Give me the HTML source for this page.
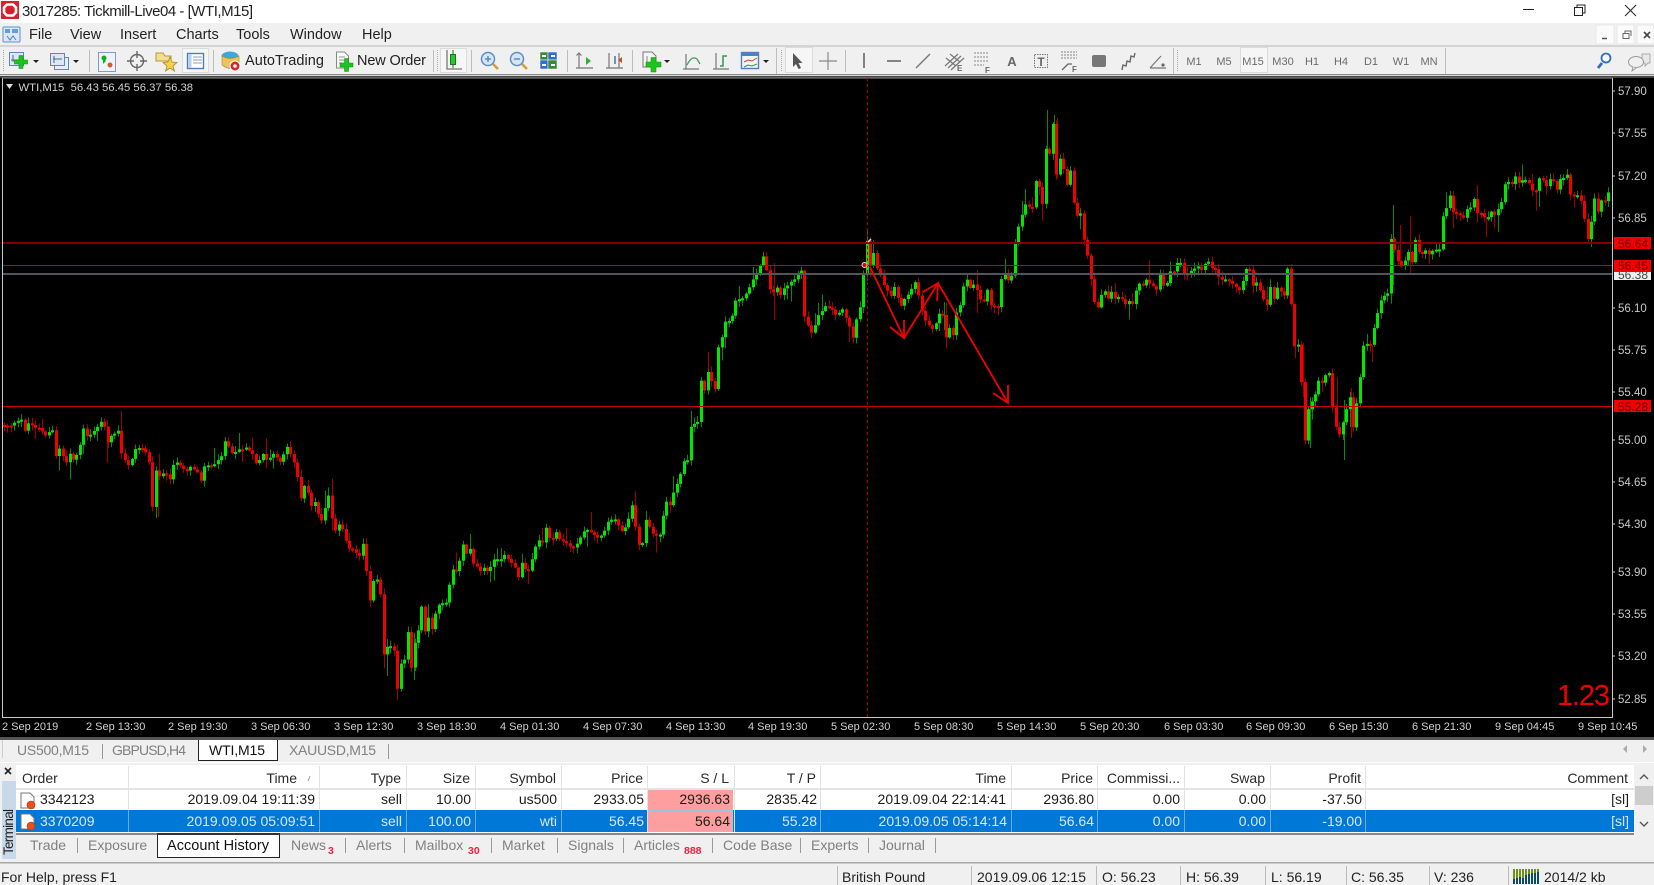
<!DOCTYPE html>
<html><head><meta charset="utf-8"><title>3017285: Tickmill-Live04 - [WTI,M15]</title>
<style>
html,body{margin:0;padding:0;background:#f0f0f0;overflow:hidden}
svg{display:block;font-family:"Liberation Sans",Arial,sans-serif}
.h text{font-size:14px;fill:#2a2a2a;text-anchor:end}
.w text{font-size:14px;fill:#1c1c1c;text-anchor:end}
.b text{font-size:14px;fill:#d8e8f8;text-anchor:end}
.t text{font-size:14px;fill:#808080}
.r{font-size:10.5px!important;font-weight:bold;fill:#f0203c!important}
.m text{font-size:14.5px;fill:#222}
.p text{font-size:11.5px;fill:#c8c8c8}
.x text{font-size:11px;fill:#d0d0d0}
.f text{font-size:11px;fill:#6a6a6a;text-anchor:middle}
.s text{font-size:14px;fill:#222}
.g{fill:none;stroke:#666;stroke-width:1.4}
</style></head>
<body>
<svg xmlns="http://www.w3.org/2000/svg" width="1654" height="885" viewBox="0 0 1654 885">
<rect width="1654" height="885" fill="#f0f0f0"/>
<!-- title bar -->
<rect width="1654" height="23" fill="#fff"/>
<rect x="1" y="1" width="18" height="18" fill="#d8202c"/>
<path d="M7 4.500h6l3 3v5l-3 3H7l-3-3v-5z" fill="none" stroke="#fff" stroke-width="2.600"/>
<text x="22" y="16" font-size="15" fill="#222" textLength="231">3017285: Tickmill-Live04 - [WTI,M15]</text>
<path d="M1523 9.500h11" stroke="#222" stroke-width="1"/>
<path d="M1574.500 7.500h8v8h-8zM1577 7.500v-2.500h8v8h-2.500" fill="none" stroke="#222"/>
<path d="M1625 5l11 11M1636 5l-11 11" stroke="#222" stroke-width="1"/>
<!-- menu -->
<g fill="#6a9bd8"><rect x="3" y="27" width="17" height="15" rx="1" fill="#dce8f8" stroke="#5d8fd0"/><rect x="5" y="29" width="5" height="4"/><rect x="12" y="29" width="6" height="4"/><path d="M7 36l3 4 3-4 3 4" fill="none" stroke="#4b7fc4"/></g>
<g class="m">
<text x="29" y="39">File</text><text x="70" y="39">View</text><text x="120" y="39">Insert</text><text x="176" y="39">Charts</text><text x="236" y="39">Tools</text><text x="290" y="39">Window</text><text x="362" y="39">Help</text>
</g>
<g fill="#fbfbfb" stroke="#e8e8e8"><rect x="1596" y="25" width="18" height="19"/><rect x="1617" y="25" width="17" height="19"/><rect x="1637" y="25" width="17" height="19"/></g>
<path d="M1602 38.500h5" stroke="#555" stroke-width="1.500"/>
<path d="M1623 33.500h6v5h-6zM1625 33v-2h6v5" fill="none" stroke="#666"/>
<path d="M1644 32l6 6M1650 32l-6 6" stroke="#444" stroke-width="1.600"/>
<rect y="45" width="1654" height="2" fill="#d4d4d4"/>
<!-- toolbar -->
<rect y="74" width="1654" height="1" fill="#8a8a8a"/><rect y="75" width="1654" height="1" fill="#d8d8d8"/><rect y="76" width="1654" height="2" fill="#444"/>
<g stroke="#bdbdbd"><path d="M89.500 50v22M213.500 50v22M433.500 50v22M471.500 50v22M567.500 50v22M632.500 50v22M776.500 48v26M845.500 50v22M1173.500 48v26M1445.500 48v26"/></g>
<g stroke="#aaa" stroke-dasharray="1 1"><path d="M3.500 50v22M437.500 50v22M781.500 50v22M1177.500 50v22"/></g>
<!-- active boxes -->
<g fill="#f6f6f6" stroke="#dcdcdc"><rect x="182.500" y="48.500" width="26" height="24"/><rect x="440.500" y="48.500" width="26" height="24"/><rect x="785.500" y="47.500" width="27" height="25"/><rect x="1240.500" y="47.500" width="27" height="25"/></g>
<!-- new chart -->
<rect x="9.500" y="52.500" width="14" height="13" fill="#dde8f6" stroke="#5d86bd"/>
<path d="M13 55v7M11 60h8" stroke="#567" fill="none"/>
<path d="M19 55.500h4v4.500h4.500v4h-4.500v4.500h-4v-4.500h-4.500v-4h4.500z" fill="#1cc41c" stroke="#0c900c" stroke-width=".6"/>
<path d="M33 60h6l-3 3z" fill="#222"/>
<rect x="54.500" y="57.500" width="14" height="12" fill="#e8eef8" stroke="#5d86bd"/><rect x="50.500" y="53.500" width="14" height="12" fill="#dde8f6" stroke="#5d86bd"/>
<path d="M53 59h9M54 56v7" stroke="#567"/>
<path d="M73 60h6l-3 3z" fill="#222"/>
<!-- market watch -->
<rect x="98.500" y="52.500" width="17" height="19" fill="#eef3fa" stroke="#7c9cc6"/><path d="M103 58l3 3-3 3z" fill="#18b018"/><circle cx="104" cy="58" r="2.500" fill="#1aa91a"/><circle cx="110" cy="65" r="2.500" fill="#d85a2a"/>
<!-- data window -->
<circle cx="137" cy="61" r="6.500" class="g"/><path d="M137 51v7M137 64v7M127 61h7M140 61h7" class="g"/>
<!-- navigator star -->
<path d="M156 53h7l2 3h6v5h-15z" fill="#f4dc90" stroke="#b39a48"/><path d="M170 57l2 5 5 .5-4 3.500 1.500 5-4.500-3-4.500 3 1.500-5-4-3.500 5-.5z" fill="#f6d24a" stroke="#a8891e" stroke-width=".8"/>
<!-- terminal -->
<rect x="187.500" y="53.500" width="16" height="15" fill="#fff" stroke="#4d7fc0" stroke-width="1.400"/><rect x="188" y="54" width="3.500" height="14" fill="#b8cfee"/><path d="M193 57h9M193 60h9M193 63h9" stroke="#99b"/>
<!-- autotrading -->
<ellipse cx="230" cy="56" rx="8.500" ry="4.500" fill="#45a4d8"/><path d="M222 56q8 5 17 0v9q-8 7-17 0z" fill="#eec35a" stroke="#a88a30" stroke-width=".6"/><circle cx="235" cy="66" r="5" fill="#d8262c" stroke="#fff"/><circle cx="235" cy="66" r="1.800" fill="#fff"/>
<text x="245" y="65" font-size="14.500" fill="#222" textLength="79">AutoTrading</text>
<!-- new order -->
<path d="M336.500 52h8l4 4v12h-12z" fill="#f8f8f8" stroke="#888"/><path d="M339 57h6M339 60h7M339 63h3" stroke="#999"/>
<path d="M344.500 58.500h4v4.500h4.500v4h-4.500v4.500h-4v-4.500h-4.500v-4h4.500z" fill="#1cc41c" stroke="#0c900c" stroke-width=".5"/>
<text x="357" y="65" font-size="14.500" fill="#222" textLength="69">New Order</text>
<!-- candle chart -->
<path d="M447 50v19h15" fill="none" stroke="#777" stroke-width="1.300"/><rect x="450.500" y="54.500" width="5" height="10" fill="#28c828" stroke="#167816"/><path d="M453 50v4M453 65v3" stroke="#167816"/>
<!-- zoom -->
<circle cx="488" cy="59" r="6.500" fill="#d4e6f6" stroke="#5c8fc4" stroke-width="1.500"/><path d="M485 59h6M488 56v6" stroke="#4a7db0" stroke-width="1.300"/><path d="M493 64l5 5" stroke="#d69b3a" stroke-width="2.600"/>
<circle cx="517" cy="59" r="6.500" fill="#d4e6f6" stroke="#5c8fc4" stroke-width="1.500"/><path d="M514 59h6" stroke="#4a7db0" stroke-width="1.300"/><path d="M522 64l5 5" stroke="#d69b3a" stroke-width="2.600"/>
<!-- tile -->
<g stroke="#fff" stroke-width=".5"><rect x="540" y="52" width="8" height="8" fill="#3a8a3a"/><rect x="548" y="52" width="9" height="8" fill="#2f6fd0"/><rect x="540" y="60" width="8" height="9" fill="#2f6fd0"/><rect x="548" y="60" width="9" height="9" fill="#3a8a3a"/></g>
<path d="M542 56h4M551 56h4M542 65h4M551 65h4" stroke="#fff" stroke-width="2"/>
<!-- shift -->
<path d="M579 53v15M576 68h17M576.500 55.500l2.500-2.500 2.500 2.500" fill="none" stroke="#777" stroke-width="1.200"/><path d="M586 57l5 4-5 4z" fill="#32b032"/>
<path d="M609 53v15M606 68h17M619 53v15" fill="none" stroke="#777" stroke-width="1.200"/><path d="M615 56v8" stroke="#3b78b4" stroke-width="1.500"/><path d="M618 60l4-3v6z" fill="#c85020"/>
<!-- indicators -->
<path d="M643 52h9l4 4v11h-13z" fill="#f4f4f4" stroke="#777"/><path d="M647 56v6" stroke="#888"/>
<path d="M651 57.500h5v4.500h5v5h-5v5h-5v-5h-5v-5h5z" fill="#1cc41c" stroke="#0c900c" stroke-width=".5"/>
<path d="M664 60h6l-3 3z" fill="#222"/>
<path d="M686 54v15M683 69h16" fill="none" stroke="#777" stroke-width="1.200"/><path d="M687 65q5-10 10-6l3 5" fill="none" stroke="#3a9a60" stroke-width="1.300"/>
<path d="M716 53v16M713 69h16" fill="none" stroke="#777" stroke-width="1.200"/><path d="M720 66h3v-10h4" fill="none" stroke="#2e9a50" stroke-width="1.500"/>
<rect x="741.500" y="52.500" width="17" height="16" fill="#f4f4f4" stroke="#4c80c0" stroke-width="1.400"/><rect x="741" y="52" width="18" height="4" fill="#4c80c0"/><path d="M744 62l4-2 4 1 5-3" stroke="#c84b28" fill="none"/><path d="M744 67l4-2 4 1 5-2" stroke="#2e9a50" fill="none"/>
<path d="M763 60h6l-3 3z" fill="#222"/>
<!-- cursor etc -->
<path d="M793 53v14l3-3 2.500 5 2.500-1-2.500-5h4z" fill="#555"/>
<path d="M828 52v18M819 61h18" stroke="#888" stroke-width="1.200"/>
<path d="M864 53v15" stroke="#777" stroke-width="1.800"/>
<path d="M887 61h14" stroke="#777" stroke-width="1.800"/>
<path d="M916 68l14-14" stroke="#777" stroke-width="1.400"/>
<path d="M945 66l13-12M948 68l13-12M951 70l13-12M946 58l10 8M950 54l10 8" stroke="#777" fill="none" stroke-width="1.200"/><text x="957" y="71" font-size="8" font-weight="bold" fill="#666">E</text>
<path d="M974 53h15M974 57h15M974 61h15M974 65h10" stroke="#888" stroke-dasharray="2 1"/><text x="985" y="73" font-size="8" font-weight="bold" fill="#666">F</text>
<text x="1012" y="66" font-size="13" font-weight="bold" fill="#666" text-anchor="middle">A</text>
<rect x="1034.500" y="54.500" width="13" height="13" fill="none" stroke="#777" stroke-dasharray="1.500 1"/><text x="1041" y="66" font-size="12" font-weight="bold" fill="#666" text-anchor="middle">T</text>
<path d="M1061 52h16M1061 55h16M1061 58h16" stroke="#888" stroke-dasharray="2 1"/><path d="M1062 70l6-6h4" fill="none" stroke="#666" stroke-width="1.300"/><text x="1072" y="72" font-size="8" font-weight="bold" fill="#666">F</text>
<rect x="1092" y="55" width="14" height="12" rx="2" fill="#777"/>
<path d="M1122 70l1-5 3 1 1-5 3 1 1-6 3 1 1-4" fill="none" stroke="#666" stroke-width="1.400"/>
<path d="M1150 68h16M1150 68l11-12" fill="none" stroke="#777" stroke-width="1.200"/><circle cx="1163" cy="65" r="1.600" fill="#666"/>
<g class="f"><text x="1194" y="65">M1</text><text x="1224" y="65">M5</text><text x="1253" y="65">M15</text><text x="1283" y="65">M30</text><text x="1312" y="65">H1</text><text x="1341" y="65">H4</text><text x="1371" y="65">D1</text><text x="1401" y="65">W1</text><text x="1429" y="65">MN</text></g>
<circle cx="1606" cy="58" r="4.500" fill="#fff" stroke="#2e6fc0" stroke-width="1.800"/><path d="M1602 63l-4 5" stroke="#2e6fc0" stroke-width="2.800"/>
<path d="M1642 54h8v9h-2l-3 3v-3h-3z" fill="#e8e8e8" stroke="#aaa"/><ellipse cx="1636" cy="62" rx="7.500" ry="5.500" fill="#f0f0f0" stroke="#999"/><path d="M1633 67l-1 4 4-3" fill="#f0f0f0" stroke="#999"/>
<!-- chart -->
<rect y="78" width="1654" height="660" fill="#000"/>
<g id="c"></g>
<path d="M2.500 78v640M2.500 717.500H1612.500M1612.500 78v640" fill="none" stroke="#c8c8c8"/>
<path d="M2.500 78H1612.500" fill="none" stroke="#8c8c8c"/>
<rect x="3" y="242" width="1609" height="2" fill="#800000"/>
<rect x="3" y="265" width="1609" height="1" fill="#c80000"/>
<rect x="3" y="273" width="1609" height="2" fill="#50555c"/>
<rect x="3" y="406" width="1609" height="1" fill="#c80000"/>
<path d="M867.500 78V717" stroke="#b00000" stroke-dasharray="3 3"/>
<g fill="none" stroke="#f00000" stroke-width="1.800"><path d="M870 267L904 338M890 327L904 338L904 320"/><path d="M904 338L938 283M923 292L938 283L937 301"/><path d="M938 283L1008 403M993 393L1008 403L1008 385"/></g>
<circle cx="864.500" cy="265" r="2.500" fill="#d00" stroke="#ddd" stroke-width="1"/><path d="M868 242l3-3" stroke="#ddd" stroke-width="1.500"/>
<path d="M6 84h7l-3.500 5z" fill="#ddd"/>
<g class="x"><text x="18.500" y="91" xml:space="preserve" style="font-size:11.300px">WTI,M15  56.43 56.45 56.37 56.38</text></g>
<text x="1557" y="705" font-size="29" fill="#f00000" textLength="53">1.23</text>
<g stroke="#c8c8c8"><path d="M1612 91h3M1612 133h3M1612 176h3M1612 218h3M1612 308h3M1612 350h3M1612 392h3M1612 440h3M1612 482h3M1612 524h3M1612 572h3M1612 614h3M1612 656h3M1612 699h3"/></g>
<g class="p">
<text x="1618" y="95">57.90</text><text x="1618" y="137">57.55</text><text x="1618" y="180">57.20</text><text x="1618" y="222">56.85</text><text x="1618" y="312">56.10</text><text x="1618" y="354">55.75</text><text x="1618" y="396">55.40</text><text x="1618" y="444">55.00</text><text x="1618" y="486">54.65</text><text x="1618" y="528">54.30</text><text x="1618" y="576">53.90</text><text x="1618" y="618">53.55</text><text x="1618" y="660">53.20</text><text x="1618" y="703">52.85</text>
</g>
<rect x="1614" y="237" width="37" height="12" fill="#f40000"/><text x="1618" y="248" font-size="12" fill="#600">56.64</text>
<rect x="1614" y="272" width="37" height="8" fill="#eee"/><text x="1618" y="279" font-size="12" fill="#444">56.38</text>
<rect x="1614" y="260" width="37" height="12" fill="#f40000"/><text x="1618" y="270" font-size="12" fill="#600">56.45</text>
<rect x="1614" y="400" width="37" height="12" fill="#f40000"/><text x="1618" y="411" font-size="12" fill="#600">55.28</text>
<g class="x">
<text x="2" y="730">2 Sep 2019</text><text x="86" y="730">2 Sep 13:30</text><text x="168" y="730">2 Sep 19:30</text><text x="251" y="730">3 Sep 06:30</text><text x="334" y="730">3 Sep 12:30</text><text x="417" y="730">3 Sep 18:30</text><text x="500" y="730">4 Sep 01:30</text><text x="583" y="730">4 Sep 07:30</text><text x="666" y="730">4 Sep 13:30</text><text x="748" y="730">4 Sep 19:30</text><text x="831" y="730">5 Sep 02:30</text><text x="914" y="730">5 Sep 08:30</text><text x="997" y="730">5 Sep 14:30</text><text x="1080" y="730">5 Sep 20:30</text><text x="1164" y="730">6 Sep 03:30</text><text x="1246" y="730">6 Sep 09:30</text><text x="1329" y="730">6 Sep 15:30</text><text x="1412" y="730">6 Sep 21:30</text><text x="1495" y="730">9 Sep 04:45</text><text x="1578" y="730">9 Sep 10:45</text>
</g>
<rect y="737" width="1654" height="3" fill="#555"/>
<!-- chart tabs -->
<path d="M198.500 740v20.500h79V740" fill="#fff" stroke="#222"/>
<rect x="2" y="740" width="1" height="18" fill="#ccc"/>
<path d="M102.500 744v15M388.500 744v15" stroke="#999"/>
<g class="t"><text x="17" y="755" textLength="72">US500,M15</text><text x="112" y="755" textLength="74">GBPUSD,H4</text><text x="289" y="755" textLength="87">XAUUSD,M15</text></g>
<text x="209" y="755" font-size="14" fill="#111" textLength="56">WTI,M15</text>
<path d="M1627 745v8l-4-4z" fill="#aaa"/><path d="M1643 745v8l4-4z" fill="#aaa"/>
<!-- terminal -->
<rect y="762" width="1654" height="1" fill="#fff"/>
<rect x="16" y="765" width="1618" height="70" fill="#fff"/>
<rect x="16" y="788" width="1618" height="2" fill="#e4e4e4"/>
<rect x="16" y="810" width="1618" height="22" fill="#0078d7"/>
<rect x="647" y="790" width="86" height="20" fill="#ff9e9e"/>
<rect x="647.500" y="810.500" width="85" height="21" fill="#ff9e9e" stroke="#a0c4e8"/>
<rect x="16" y="833" width="1618" height="2" fill="#888"/>
<g stroke="#e2e2e2"><path d="M128.500 766v66M319.500 766v66M406.500 766v66M475.500 766v66M561.500 766v66M647.500 766v66M734.500 766v66M820.500 766v66M1011.500 766v66M1097.500 766v66M1184.500 766v66M1270.500 766v66M1365.500 766v66"/></g>
<g stroke="#6fa8dc"><path d="M128.500 810v22M319.500 810v22M406.500 810v22M475.500 810v22M561.500 810v22M820.500 810v22M1011.500 810v22M1097.500 810v22M1184.500 810v22M1270.500 810v22M1365.500 810v22"/></g>
<text x="22" y="783" font-size="14" fill="#2a2a2a">Order</text>
<g class="h">
<text x="297" y="783">Time</text><text x="401" y="783">Type</text><text x="470" y="783">Size</text><text x="556" y="783">Symbol</text><text x="643" y="783">Price</text><text x="729" y="783">S / L</text><text x="816" y="783">T / P</text><text x="1006" y="783">Time</text><text x="1093" y="783">Price</text><text x="1180" y="783">Commissi...</text><text x="1265" y="783">Swap</text><text x="1361" y="783">Profit</text><text x="1628" y="783">Comment</text>
</g>
<path d="M308 781l2-5" stroke="#999"/>
<path d="M21 793h9l4 4v11H21z" fill="#fff" stroke="#777"/><circle cx="31" cy="805" r="4" fill="#e8501c" stroke="#a83010" stroke-width=".6"/>
<path d="M21 814h9l4 4v11H21z" fill="#fff" stroke="#777"/><circle cx="31" cy="826" r="4" fill="#e8501c" stroke="#a83010" stroke-width=".6"/>
<text x="40" y="804" font-size="14" fill="#1c1c1c">3342123</text>
<text x="40" y="826" font-size="14" fill="#d8e8f8">3370209</text>
<g class="w">
<text x="315" y="804">2019.09.04 19:11:39</text><text x="402" y="804">sell</text><text x="471" y="804">10.00</text><text x="557" y="804">us500</text><text x="644" y="804">2933.05</text><text x="730" y="804">2936.63</text><text x="817" y="804">2835.42</text><text x="1006" y="804">2019.09.04 22:14:41</text><text x="1094" y="804">2936.80</text><text x="1180" y="804">0.00</text><text x="1266" y="804">0.00</text><text x="1362" y="804">-37.50</text><text x="1629" y="804">[sl]</text>
</g>
<g class="b">
<text x="315" y="826">2019.09.05 05:09:51</text><text x="402" y="826">sell</text><text x="471" y="826">100.00</text><text x="557" y="826">wti</text><text x="644" y="826">56.45</text><text x="817" y="826">55.28</text><text x="1007" y="826">2019.09.05 05:14:14</text><text x="1094" y="826">56.64</text><text x="1180" y="826">0.00</text><text x="1266" y="826">0.00</text><text x="1362" y="826">-19.00</text><text x="1629" y="826">[sl]</text>
</g>
<text x="730" y="826" font-size="14" fill="#1c1c1c" text-anchor="end">56.64</text>
<!-- scrollbar -->
<rect x="1635" y="765" width="19" height="70" fill="#f0f0f0"/><rect x="1635" y="786" width="18" height="19" fill="#cdcdcd"/>
<path d="M1640 779l4-4 4 4M1640 822l4 4 4-4" fill="none" stroke="#555" stroke-width="1.400"/>
<!-- left strip -->
<path d="M5 768l6 6M11 768l-6 6" stroke="#222" stroke-width="1.600"/>
<rect x="2" y="781" width="14" height="78" fill="#c9d9e9"/>
<text transform="translate(13,855) rotate(-90)" font-size="13.500" fill="#222" textLength="46">Terminal</text>
<!-- terminal tabs -->
<path d="M157.500 835v22.500h122V835" fill="#fff" stroke="#222"/><rect x="157" y="833" width="123" height="2" fill="#333"/><rect x="158" y="835" width="121" height="22" fill="#fff"/>
<g stroke="#999"><path d="M77.500 838v15M345.500 838v15M404.500 838v15M491.500 838v15M557.500 838v15M623.500 838v15M712.500 838v15M800.500 838v15M868.500 838v15M935.500 838v15"/></g>
<g class="t">
<text x="30" y="850">Trade</text><text x="88" y="850">Exposure</text><text x="291" y="850">News</text><text x="328" y="854" class="r">3</text><text x="356" y="850">Alerts</text><text x="415" y="850">Mailbox</text><text x="468" y="854" class="r">30</text><text x="502" y="850">Market</text><text x="568" y="850">Signals</text><text x="634" y="850">Articles</text><text x="684" y="854" class="r">888</text><text x="723" y="850">Code Base</text><text x="811" y="850">Experts</text><text x="879" y="850">Journal</text>
</g>
<text x="167" y="850" font-size="14.500" fill="#111" textLength="102">Account History</text>
<!-- status -->
<rect y="862" width="1654" height="1.500" fill="#a8a8a8"/>
<g stroke="#bbb"><path d="M837.500 866v19M971.500 866v19M1096.500 866v19M1180.500 866v19M1265.500 866v19M1346.500 866v19M1429.500 866v19M1508.500 866v19"/></g>
<g class="s">
<text x="1" y="882">For Help, press F1</text><text x="842" y="882">British Pound</text><text x="977" y="882">2019.09.06 12:15</text><text x="1102" y="882">O: 56.23</text><text x="1186" y="882">H: 56.39</text><text x="1271" y="882">L: 56.19</text><text x="1351" y="882">C: 56.35</text><text x="1434" y="882">V: 236</text><text x="1544" y="882">2014/2 kb</text>
</g>
<g fill="#6f8f10"><rect x="1513" y="869" width="2" height="14"/><rect x="1516" y="869" width="2" height="14"/><rect x="1519" y="869" width="2" height="14"/><rect x="1522" y="869" width="2" height="14"/><rect x="1525" y="869" width="2" height="14"/><rect x="1528" y="869" width="2" height="14"/><rect x="1531" y="869" width="2" height="14"/><rect x="1534" y="869" width="2" height="14"/><rect x="1537" y="869" width="2" height="14"/></g>
<g fill="#0d4a66"><rect x="1513" y="879" width="2" height="5"/><rect x="1516" y="878" width="2" height="6"/><rect x="1519" y="877" width="2" height="7"/><rect x="1522" y="878" width="2" height="6"/><rect x="1525" y="875" width="2" height="9"/><rect x="1528" y="874" width="2" height="10"/><rect x="1531" y="873" width="2" height="11"/><rect x="1534" y="873" width="2" height="11"/><rect x="1537" y="872" width="2" height="12"/></g>
</svg>
<script>
(function(){
var a=[10,75,30,75,60,60,70,90,80,70,105,85,130,105,145,90,155,168,165,148,185,185,195,160,205,182,225,138,235,82,245,108,265,95,282,62,290,82,300,128,310,110,330,95,340,162,348,182,360,195,380,148,395,142,410,160,418,190,428,322,436,212,446,228,465,220,475,240,485,192,495,185,510,210,520,215,535,200,550,215,562,240,572,200,580,195,595,200,610,180,620,165,630,125,648,160,668,150,688,142,705,165,720,190,735,160,745,180,765,160,785,185,800,142,815,160,825,185,842,298,852,260,862,280,870,320,882,305,892,340,900,365,910,325,920,290,928,355,940,395,948,370,958,390,968,420,978,445,990,445,1005,470,1015,432,1026,515,1035,605,1045,545,1055,540,1065,582,1075,765,1085,738,1095,735,1103,752,1113,870,1122,788,1132,778,1142,695,1152,800,1160,725,1170,690,1180,618,1190,695,1200,655,1210,690,1220,642,1228,612,1240,608,1250,605,1258,552,1268,510,1278,512,1288,480,1298,432,1305,458,1315,450,1328,488,1335,500,1345,515,1355,505,1365,515,1375,500,1385,482,1403,480,1413,468,1425,480,1440,500,1452,535,1462,492,1475,515,1490,475,1500,440,1510,422,1520,430,1530,385,1540,412,1550,418,1558,400];
var b=[50,955,65,960,75,970,90,985,105,970,122,935,133,932,150,945,165,950,180,935,190,905,210,895,225,930,240,925,258,858,275,975,285,968,298,900,315,940,335,945,345,888,355,845,365,855,375,815,385,795,393,762,403,722,412,720,423,618,435,612,445,605,452,485,462,510,472,458,480,480,492,505,500,380,510,350,520,305,530,305,540,288,550,240,560,240,570,232,578,222,598,178,607,160,617,140,627,112,645,205,655,220,665,205,675,228,685,208,695,200,705,182,715,180,725,165,735,150,742,290,752,318,762,335,772,318,782,285,792,275,802,262,815,272,830,285,848,268,878,350,888,300,895,265,907,162,917,63,925,135,935,100,945,145,955,165,965,195,975,215,985,225,995,200,1005,230,1015,258,1025,235,1040,205,1050,190,1060,225,1075,300,1082,295,1090,318,1102,325,1115,282,1130,288,1140,350,1148,325,1158,345,1168,275,1178,255,1188,198,1198,180,1208,205,1218,195,1235,240,1245,245,1255,208,1265,258,1275,255,1285,260,1293,180,1303,160,1313,178,1323,165,1332,70,1342,18];
var c=[8,310,18,143,28,160,37,72,46,225,56,175,65,205,74,255,84,215,93,305,103,350,112,338,122,420,130,465,140,540,150,605,158,620,168,588,178,575,187,595,196,575,205,592,215,592,225,600,233,615,243,603,252,610,262,575,270,550,280,555,290,540,298,550,308,562,318,568,327,525,337,555,346,550,356,515,366,515,372,490,382,490,392,520,402,525,410,510,420,505,430,498,440,510,448,495,458,485,466,505,476,505,486,530,494,540,504,535,514,540,522,548,532,565,542,570,550,545,560,510,568,510,578,560,588,550,598,572,607,595,617,615,625,560,635,595,645,565,655,590,665,530,672,505,683,695,692,735,700,733,710,845,718,1020,728,925,738,905,748,860,757,845,765,850,775,825,785,822,793,925,803,980,812,1000,822,970,832,895,842,980,850,905,858,908,868,830,878,740,888,730,896,735,906,685,915,640,925,600,935,580,945,540,953,415,963,480,972,500,982,478,992,458,1000,490,1010,420,1018,455,1028,458,1037,458,1048,445,1055,460,1065,450,1075,445,1084,445,1093,350,1103,290,1112,340,1122,338,1130,338,1140,355,1150,328,1158,345,1168,298,1178,340,1186,325,1196,350,1205,355,1215,360,1223,338,1233,358,1242,330,1252,275,1260,255,1270,245,1278,255,1288,228,1298,245,1308,240,1317,248,1327,272,1337,270,1345,238,1355,238,1365,255,1375,235,1385,240,1393,272,1402,235,1412,235,1420,225,1430,285,1440,290,1450,285,1458,300,1467,358,1477,415,1487,365,1495,295,1505,335,1515,300,1525,305,1533,275,1542,300];
var P=[],i;
for(i=0;i<a.length;i+=2)P.push([a[i]/2.8,400+a[i+1]/3]);
for(i=0;i<b.length;i+=2)P.push([540+b[i]/2.8,220+b[i+1]/3]);
P.push([1022,215],[1026,205],[1030,208],[1034,205],[1037,180]);
for(i=0;i<c.length;i+=2)P.push([1040+c[i]/2.703,100+c[i+1]/3]);
var s=12345;function r(){s=(s*1103515245+12345)&0x7fffffff;return s/0x7fffffff}
function f(x){for(var j=1;j<P.length;j++){if(x<=P[j][0]){var p=P[j-1],q=P[j],t=(x-p[0])/((q[0]-p[0])||1);return p[1]+(q[1]-p[1])*t}}return P[P.length-1][1]}
/* long wicks: x, top, bottom, bullish */
var W=[[121,411,457,0],[107,420,463,0],[156,470,518,1],[158,470,517,0],[397,660,700,0],[387,647,676,1],[414,633,680,1],[774,263,320,0],[946,317,348,0],[708,352,393,0],[944,302,330,1],[977,270,313,0],[1047,110,203,1],[1054,115,153,1],[1057,118,178,0],[1344,400,460,1],[1310,397,448,1],[1393,205,285,1],[1410,216,273,0],[1400,225,267,0],[1486,217,237,0],[1295,327,358,0],[1303,343,397,0],[1337,377,427,0],[1351,388,438,0],[1372,345,362,0]];
var out='',k;
for(k=0;k<W.length;k++)out+='<rect x="'+W[k][0]+'" y="'+W[k][1]+'" width="1" height="'+(W[k][2]-W[k][1])+'" fill="'+(W[k][3]?'#0a8a0a':'#a00000')+'"/>';
var prev=f(3.5),n=Math.floor((1610-4)/3.45);
for(i=0;i<=n;i++){
 var cx=4+i*3.45,x=Math.round(cx),best=null,bd=-1;
 for(k=0;k<P.length;k++){if(P[k][0]>=cx-1.725&&P[k][0]<cx+1.725){var d=Math.abs(P[k][1]-prev);if(d>bd){bd=d;best=P[k][1]}}}
 var cl=(best===null?f(cx):best)+(r()-.5)*2.4;
 var top=Math.min(prev,cl),bot=Math.max(prev,cl),up=cl<=prev;
 if(bot-top<2)bot=top+2;
 var w1=r()*5+1,w2=r()*5+1;if(r()<.12)w1+=r()*14;if(r()<.12)w2+=r()*14;
 var col=up?'#00e800':'#f00000',wc=up?'#0a8a0a':'#a00000';
 out+='<rect x="'+x+'" y="'+(top-w1).toFixed(1)+'" width="1" height="'+(bot-top+w1+w2).toFixed(1)+'" fill="'+wc+'"/>';
 out+='<rect x="'+(x-1)+'" y="'+top.toFixed(1)+'" width="3" height="'+(bot-top).toFixed(1)+'" fill="'+col+'"/>';
 prev=cl;
}
document.getElementById('c').innerHTML=out;
})();
</script>
</body></html>
